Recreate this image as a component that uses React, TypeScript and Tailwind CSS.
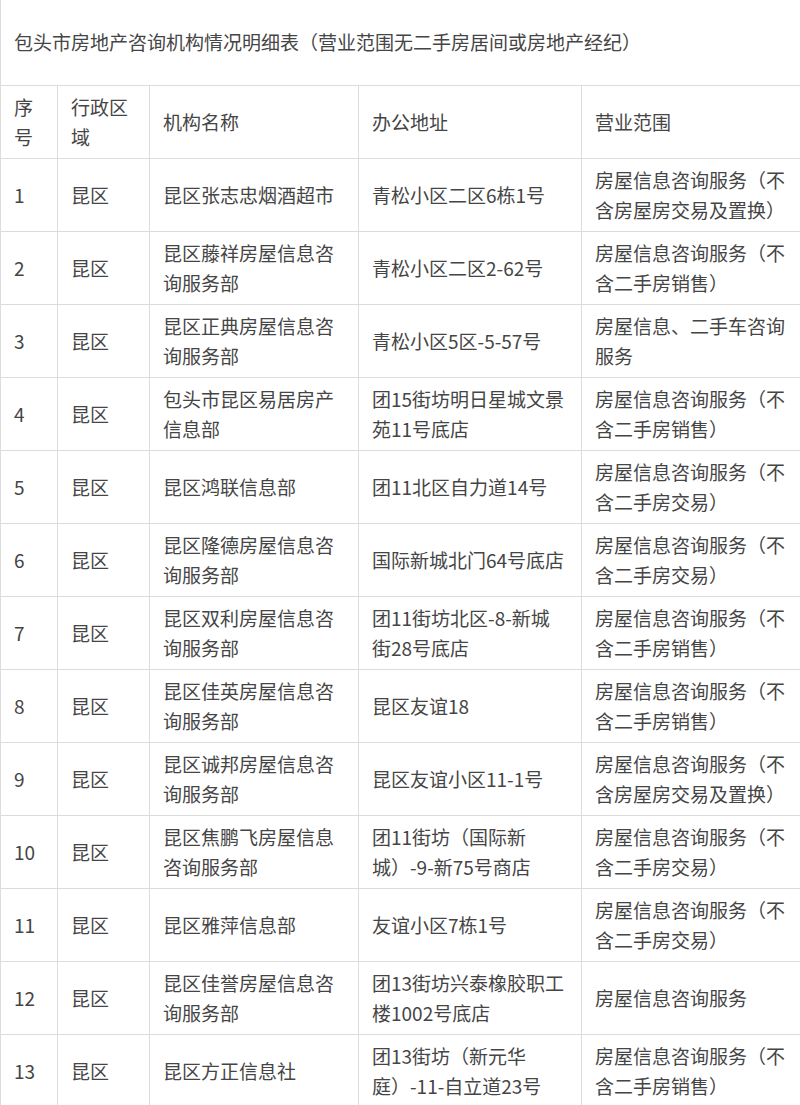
type Row = {
  no: string;
  district: string;
  name: string[];
  address: string[];
  scope: string[];
};

const rows: Row[] = [
  { no: '1', district: '昆区', name: ['昆区张志忠烟酒超市'], address: ['青松小区二区6栋1号'], scope: ['房屋信息咨询服务（不', '含房屋房交易及置换）'] },
  { no: '2', district: '昆区', name: ['昆区藤祥房屋信息咨', '询服务部'], address: ['青松小区二区2-62号'], scope: ['房屋信息咨询服务（不', '含二手房销售）'] },
  { no: '3', district: '昆区', name: ['昆区正典房屋信息咨', '询服务部'], address: ['青松小区5区-5-57号'], scope: ['房屋信息、二手车咨询', '服务'] },
  { no: '4', district: '昆区', name: ['包头市昆区易居房产', '信息部'], address: ['团15街坊明日星城文景', '苑11号底店'], scope: ['房屋信息咨询服务（不', '含二手房销售）'] },
  { no: '5', district: '昆区', name: ['昆区鸿联信息部'], address: ['团11北区自力道14号'], scope: ['房屋信息咨询服务（不', '含二手房交易）'] },
  { no: '6', district: '昆区', name: ['昆区隆德房屋信息咨', '询服务部'], address: ['国际新城北门64号底店'], scope: ['房屋信息咨询服务（不', '含二手房交易）'] },
  { no: '7', district: '昆区', name: ['昆区双利房屋信息咨', '询服务部'], address: ['团11街坊北区-8-新城', '街28号底店'], scope: ['房屋信息咨询服务（不', '含二手房销售）'] },
  { no: '8', district: '昆区', name: ['昆区佳英房屋信息咨', '询服务部'], address: ['昆区友谊18'], scope: ['房屋信息咨询服务（不', '含二手房销售）'] },
  { no: '9', district: '昆区', name: ['昆区诚邦房屋信息咨', '询服务部'], address: ['昆区友谊小区11-1号'], scope: ['房屋信息咨询服务（不', '含房屋房交易及置换）'] },
  { no: '10', district: '昆区', name: ['昆区焦鹏飞房屋信息', '咨询服务部'], address: ['团11街坊（国际新', '城）-9-新75号商店'], scope: ['房屋信息咨询服务（不', '含二手房交易）'] },
  { no: '11', district: '昆区', name: ['昆区雅萍信息部'], address: ['友谊小区7栋1号'], scope: ['房屋信息咨询服务（不', '含二手房交易）'] },
  { no: '12', district: '昆区', name: ['昆区佳誉房屋信息咨', '询服务部'], address: ['团13街坊兴泰橡胶职工', '楼1002号底店'], scope: ['房屋信息咨询服务'] },
  { no: '13', district: '昆区', name: ['昆区方正信息社'], address: ['团13街坊（新元华', '庭）-11-自立道23号'], scope: ['房屋信息咨询服务（不', '含二手房销售）'] },
];

function Lines({ lines }: { lines: string[] }) {
  return (
    <>
      {lines.map((line, i) => (
        <div key={i} className="whitespace-nowrap">
          {line}
        </div>
      ))}
    </>
  );
}

const cell = 'border border-[#dcdcdc] px-[13px] align-middle';

export default function App() {
  return (
    <div
      className="w-[800px] overflow-hidden bg-white text-[19px] leading-[30px] text-[#454545]"
      style={{ fontFamily: '"Microsoft YaHei", "Noto Sans CJK SC", "Noto Sans", sans-serif' }}
    >
      <table className="w-[801px] table-fixed border-collapse text-left">
        <colgroup>
          <col className="w-[57px]" />
          <col className="w-[92px]" />
          <col className="w-[209px]" />
          <col className="w-[223px]" />
          <col className="w-[220px]" />
        </colgroup>
        <tbody>
          <tr className="h-[85px]">
            <td colSpan={5} className={`${cell} border-t-0 whitespace-nowrap`}>
              包头市房地产咨询机构情况明细表（营业范围无二手房居间或房地产经纪）
            </td>
          </tr>
          <tr className="h-[73px]">
            <td className={cell}>
              <Lines lines={['序', '号']} />
            </td>
            <td className={cell}>
              <Lines lines={['行政区', '域']} />
            </td>
            <td className={cell}>机构名称</td>
            <td className={cell}>办公地址</td>
            <td className={cell}>营业范围</td>
          </tr>
          {rows.map((row) => (
            <tr key={row.no} className="h-[73px]">
              <td className={cell}>{row.no}</td>
              <td className={cell}>{row.district}</td>
              <td className={cell}>
                <Lines lines={row.name} />
              </td>
              <td className={cell}>
                <Lines lines={row.address} />
              </td>
              <td className={cell}>
                <Lines lines={row.scope} />
              </td>
            </tr>
          ))}
        </tbody>
      </table>
    </div>
  );
}
